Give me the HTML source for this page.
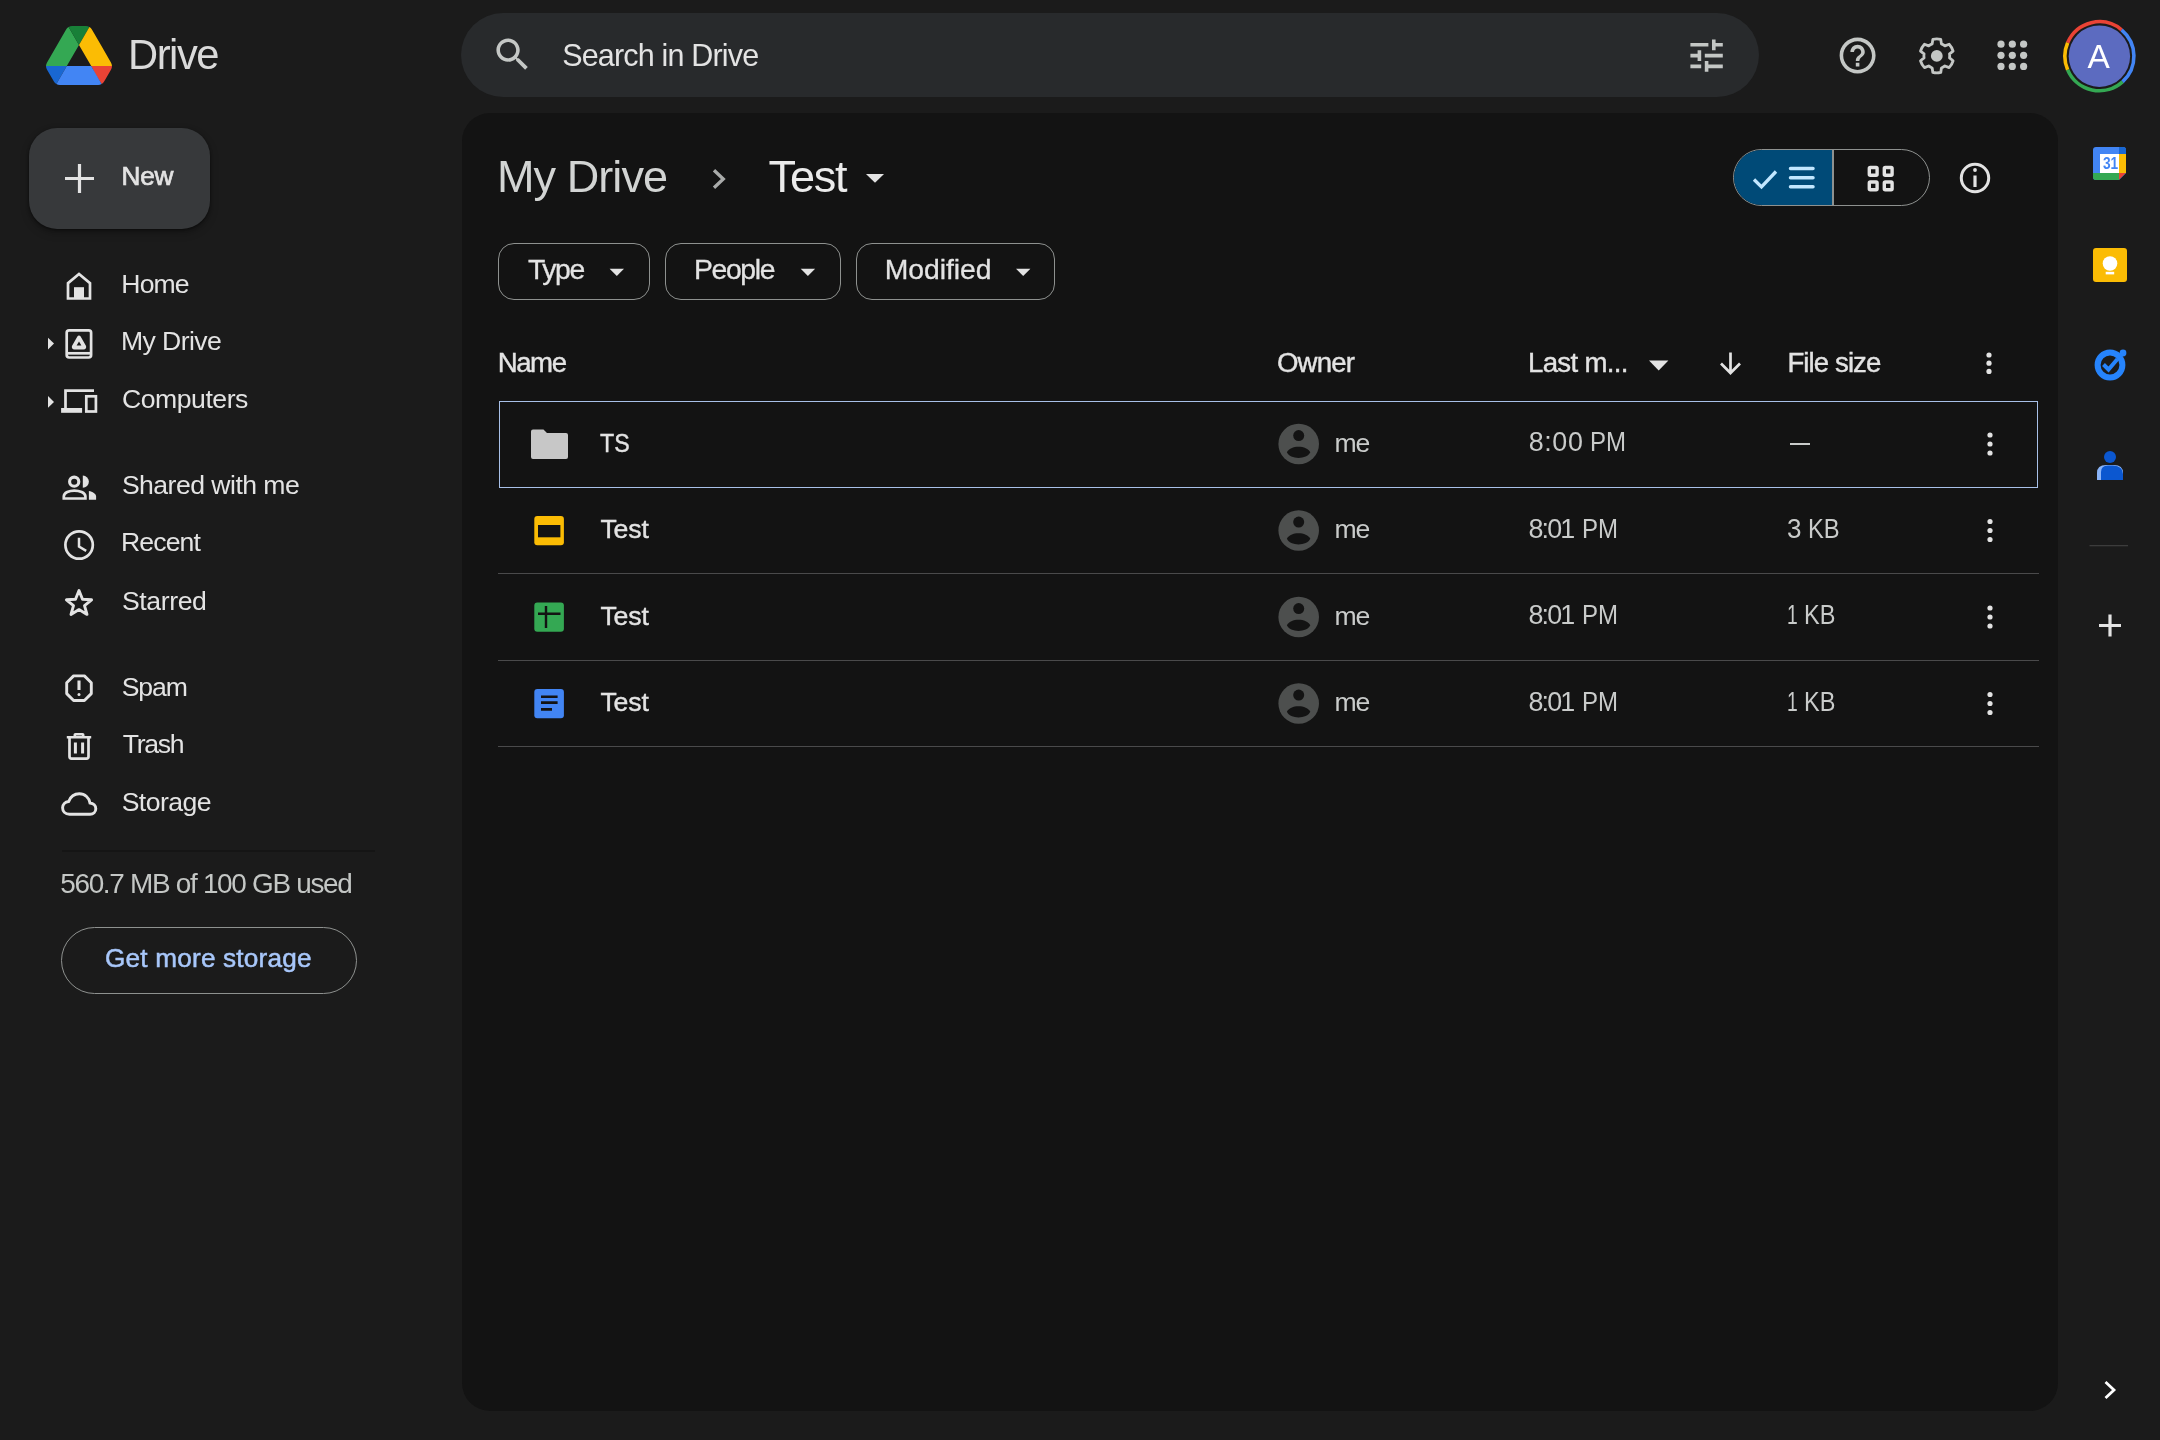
<!DOCTYPE html>
<html><head><meta charset="utf-8">
<style>
html,body{margin:0;padding:0;}
body{width:2160px;height:1440px;overflow:hidden;background:#1b1b1b;position:relative;font-family:"Liberation Sans",sans-serif;color:#e3e3e3;}
.a{position:absolute;box-sizing:content-box;}
.t{position:absolute;white-space:nowrap;line-height:1;}
#tx{position:absolute;left:0;top:0;width:2160px;height:1440px;will-change:transform;}
svg{position:absolute;overflow:visible;}
</style></head><body>
<svg style="left:45.8px;top:25.6px" width="66" height="59" viewBox="0 0 87.3 78">
<path d="m6.6 66.85 3.85 6.65c.8 1.4 1.95 2.5 3.3 3.3l13.75-23.8h-27.5c0 1.550.4 3.1 1.2 4.5z" fill="#1967d2"/>
<path d="m43.65 25-13.75-23.8c-1.35.8-2.5 1.9-3.3 3.3l-25.4 44a9.06 9.06 0 0 0 -1.2 4.5h27.5z" fill="#34a853"/>
<path d="m73.55 76.8c1.35-.8 2.5-1.9 3.3-3.3l1.6-2.75 7.65-13.25c.8-1.4 1.2-2.95 1.2-4.5h-27.502l5.852 11.5z" fill="#ea4335"/>
<path d="m43.65 25 13.75-23.8c-1.35-.8-2.9-1.2-4.5-1.2h-18.5c-1.6 0-3.15.45-4.5 1.2z" fill="#188038"/>
<path d="m59.8 53h-32.3l-13.750 23.8c1.35.8 2.9 1.2 4.5 1.2h50.8c1.6 0 3.15-.45 4.5-1.2z" fill="#4285f4"/>
<path d="m73.4 26.5-12.7-22c-.8-1.4-1.95-2.5-3.3-3.3l-13.75 23.8 16.15 28h27.45c0-1.55-.4-3.1-1.2-4.5z" fill="#fbbc04"/>
</svg>
<div class="a" style="left:29px;top:128px;width:181px;height:101px;border-radius:28px;background:#37393b;box-shadow:0 1px 3px rgba(0,0,0,.5),0 4px 8px rgba(0,0,0,.25)"></div>
<svg style="left:0;top:0" width="300" height="300"><path d="M79.5 164v29M65 178.5h29" stroke="#e3e3e3" stroke-width="3.2" fill="none"/></svg>

<svg style="left:0;top:0" width="400" height="900" fill="none" stroke="#e3e3e3" stroke-width="2.7">
 <!-- home -->
 <path d="M68 298.5V283.2L79 273.9L90 283.2V298.5Z" stroke-linejoin="miter"/>
 <rect x="74" y="287.2" width="10" height="11" fill="#e3e3e3" stroke="none"/>
 <!-- my drive -->
 <rect x="66.7" y="330.3" width="24.4" height="27.2" rx="2.4"/>
 <path d="M67 353.3H91"/>
 <path d="M79 337.2 L84.3 346.3 Q85 347.8 83.4 347.8 H74.6 Q73 347.8 73.7 346.3 Z" stroke-width="3.4" stroke-linejoin="round" fill="#e3e3e3"/>
 <path d="M79 341.6 L81.4 345.6 H76.6 Z" fill="#1b1b1b" stroke="none"/>
 <!-- computers -->
 <path d="M65.5 409V390.7H94" />
 <rect x="61.1" y="408" width="21" height="4.8" fill="#e3e3e3" stroke="none"/>
 <rect x="86.3" y="396.3" width="9.6" height="15.2"/>
 <!-- expand arrows -->
 <path d="M48 337.8L54 343.6L48 349.4Z" fill="#e3e3e3" stroke="none"/>
 <path d="M48 396L54 401.9L48 407.8Z" fill="#e3e3e3" stroke="none"/>
 <!-- shared -->
 <circle cx="74.2" cy="481.7" r="4.6" stroke-width="3.1"/>
 <path d="M82.8 475.6A6.1 6.1 0 0 1 82.8 487.8Z" fill="#e3e3e3" stroke="none"/>
 <path d="M63.8 498.5V496.5C63.8 492.5 69.5 490.6 74.3 490.6C79.1 490.6 85.4 492.5 85.4 496.5V498.5Z"/>
 <path d="M88.9 491C92.5 491.8 96.1 493.5 96.1 496.5V499.8H88.9Z" fill="#e3e3e3" stroke="none"/>
 <!-- recent -->
 <circle cx="79.1" cy="545" r="13.7"/>
 <path d="M79 537.8V546.6L86.2 550.8" stroke-width="2.5"/>
 <!-- star -->
 <path d="M79 590.5L82.5 599.2L91.6 599.8L84.5 605.6L87 614.4L79 609.6L71 614.4L73.5 605.6L66.4 599.8L75.5 599.2Z" stroke-width="2.9" stroke-linejoin="round"/>
 <!-- spam -->
 <path d="M73.6 675.9H84.4L91.3 682.8V693.6L84.4 700.5H73.6L66.7 693.6V682.8Z" stroke-width="2.9" stroke-linejoin="round"/>
 <path d="M79 680.5V690" stroke-width="3.1"/>
 <circle cx="79" cy="694.6" r="1.5" fill="#e3e3e3" stroke="none"/>
 <!-- trash -->
 <path d="M66.8 737.3H91.2M74.8 737V734.8Q74.8 734.2 75.4 734.2H82.6Q83.2 734.2 83.2 734.8V737" stroke-width="2.6"/>
 <path d="M69.5 737.5V756.6Q69.5 758.6 71.5 758.6H86.5Q88.5 758.6 88.5 756.6V737.5" stroke-width="2.7"/>
 <path d="M75.4 742.5V753.6M82.6 742.5V753.6" stroke-width="3"/>
 <!-- storage cloud -->
 <path d="M69.5 814.2C65 814.2 62.6 811.2 62.6 807.8C62.6 804.4 65.2 801.8 68.7 801.5C70.4 797 74.2 793.8 79.3 793.8C85.1 793.8 89.3 797.9 90 803C93.5 803.3 95.8 805.8 95.8 808.7C95.8 811.8 93.3 814.2 90.1 814.2Z" stroke-width="2.9"/>
</svg>
<div class="a" style="left:62px;top:850px;width:313px;height:2px;background:#151515"></div>
<div class="a" style="left:61px;top:927px;width:293.5px;height:65px;border-radius:34px;border:1.5px solid #8e918f"></div>
<div class="a" style="left:461px;top:13px;width:1298px;height:84px;border-radius:42px;background:#282a2c"></div>
<svg style="left:490.6px;top:33.3px" width="43.1" height="43.1" viewBox="0 0 24 24"><path fill="#c4c7c5" d="M15.5 14h-.79l-.28-.27C15.41 12.59 16 11.11 16 9.5 16 5.910 13.09 3 9.5 3S3 5.91 3 9.5 5.91 16 9.5 16c1.61 0 3.09-.59 4.23-1.57l.27.28v.79l5 4.99L20.49 19l-4.99-5zm-6 0C7.01 14 5 11.99 5 9.5S7.01 5 9.5 5 14 7.01 14 9.5 11.99 14 9.5 14z"/></svg>
<svg style="left:1685.4px;top:33.6px" width="43.2" height="43.2" viewBox="0 0 24 24"><path fill="#c4c7c5" d="M3 17v2h6v-2H3zM3 5v2h10V5H3zm10 16v-2h8v-2h-8v-2h-2v6h2zM7 9v2H3v2h4v2h2V9H7zm14 4v-2H11v2h10zm-6-4h2V7h4V5h-4V3h-2v6z"/></svg>
<svg style="left:1836px;top:34px" width="43.2" height="43.2" viewBox="0 0 24 24"><path fill="#c4c7c5" d="M11 18h2v-2h-2v2zm1-16C6.48 2 2 6.48 2 12s4.48 10 10 10 10-4.48 10-10S17.520 2 12 2zm0 18c-4.41 0-8-3.59-8-8s3.59-8 8-8 8 3.59 8 8-3.59 8-8 8zm0-14c-2.21 0-4 1.79-4 4h2c0-1.1.9-2 2-2s2 .9 2 2c0 2-3 1.75-3 5h2c0-2.25 3-2.5 3-5 0-2.21-1.79-4-4-4z"/></svg>
<svg style="left:0;top:0" width="2160" height="120"><path d="M1941.42 43.86L1940.77 39.37A17.0 17.0 0 0 0 1932.83 39.37L1932.18 43.86A12.9 12.9 0 0 0 1928.68 45.87L1924.47 44.20A17.0 17.0 0 0 0 1920.50 51.07L1924.06 53.88A12.9 12.9 0 0 0 1924.06 57.92L1920.50 60.73A17.0 17.0 0 0 0 1924.47 67.60L1928.68 65.93A12.9 12.9 0 0 0 1932.18 67.94L1932.83 72.43A17.0 17.0 0 0 0 1940.77 72.43L1941.42 67.94A12.9 12.9 0 0 0 1944.92 65.93L1949.13 67.60A17.0 17.0 0 0 0 1953.10 60.73L1949.54 57.92A12.9 12.9 0 0 0 1949.54 53.88L1953.10 51.07A17.0 17.0 0 0 0 1949.13 44.20L1944.92 45.87A12.9 12.9 0 0 0 1941.42 43.86Z" fill="none" stroke="#c4c7c5" stroke-width="2.8" stroke-linejoin="round"/><circle cx="1936.8" cy="55.9" r="5.9" fill="#c4c7c5"/></svg>
<svg style="left:0;top:0" width="2160" height="120" fill="#c4c7c5"><circle cx="2001.0" cy="44.2" r="3.6"/><circle cx="2001.0" cy="55.3" r="3.6"/><circle cx="2001.0" cy="66.4" r="3.6"/><circle cx="2012.3" cy="44.2" r="3.6"/><circle cx="2012.3" cy="55.3" r="3.6"/><circle cx="2012.3" cy="66.4" r="3.6"/><circle cx="2023.6" cy="44.2" r="3.6"/><circle cx="2023.6" cy="55.3" r="3.6"/><circle cx="2023.6" cy="66.4" r="3.6"/></svg>
<svg style="left:0;top:0" width="2160" height="200" fill="none" stroke-width="3.6"><path d="M2067.64 42.72A34.5 34.5 0 0 1 2121.58 29.77" stroke="#ea4335"/><path d="M2121.58 29.77A34.5 34.5 0 0 1 2122.49 81.84" stroke="#4285f4"/><path d="M2122.49 81.84A34.5 34.5 0 0 1 2067.64 69.68" stroke="#34a853"/><path d="M2067.64 69.68A34.5 34.5 0 0 1 2067.64 42.72" stroke="#fbbc04"/><circle cx="2099.4" cy="56.2" r="30.7" fill="#5c6bc0" stroke="none"/></svg>
<div class="a" style="left:462px;top:113px;width:1596px;height:1298px;border-radius:28px;background:#131313"></div>
<svg style="left:0;top:0" width="2160" height="400" fill="none"><path d="M714 170.2L723.3 179L714 187.8" stroke="#a9abaa" stroke-width="3.3"/><path d="M866 174L875 182.7L884 174Z" fill="#e3e3e3"/></svg>
<div class="a" style="left:1733px;top:149px;width:195px;height:55px;border-radius:29px;border:1.5px solid #8e918f;overflow:hidden"><div class="a" style="left:0;top:0;width:98px;height:100%;background:#004a77"></div><div class="a" style="left:98px;top:0;width:1.5px;height:100%;background:#8e918f"></div></div>
<svg style="left:0;top:0" width="2160" height="400" fill="none">
<path d="M1754 179.5L1761.5 187L1776 171.5" stroke="#c2e7ff" stroke-width="3.3"/>
<path d="M1790.5 168.6H1813M1790.5 177.7H1813M1790.5 186.7H1813" stroke="#c2e7ff" stroke-width="3.5" stroke-linecap="round"/>
<g stroke="#e3e3e3" stroke-width="3.4"><rect x="1869.3" y="167.5" width="7.8" height="7.8" rx="1"/><rect x="1884.3" y="167.5" width="7.8" height="7.8" rx="1"/><rect x="1869.3" y="182" width="7.8" height="7.8" rx="1"/><rect x="1884.3" y="182" width="7.8" height="7.8" rx="1"/></g>
<circle cx="1975" cy="178" r="13.7" stroke="#e3e3e3" stroke-width="3"/>
<path d="M1975 175.5V187" stroke="#e3e3e3" stroke-width="3.2"/><circle cx="1975" cy="170" r="1.9" fill="#e3e3e3"/>
</svg>
<div class="a" style="left:498px;top:243px;width:150.0px;height:55px;border-radius:16px;border:1.5px solid #8e918f"></div>
<svg style="left:0;top:0" width="2160" height="400"><path d="M609.6 268.8L616.8 276L624.0 268.8Z" fill="#e3e3e3"/></svg>
<div class="a" style="left:665px;top:243px;width:173.6px;height:55px;border-radius:16px;border:1.5px solid #8e918f"></div>
<svg style="left:0;top:0" width="2160" height="400"><path d="M800.7 268.8L807.9 276L815.1 268.8Z" fill="#e3e3e3"/></svg>
<div class="a" style="left:856px;top:243px;width:196.6px;height:55px;border-radius:16px;border:1.5px solid #8e918f"></div>
<svg style="left:0;top:0" width="2160" height="400"><path d="M1016 268.8L1023.2 276L1030.4 268.8Z" fill="#e3e3e3"/></svg>
<svg style="left:0;top:0" width="2160" height="400" fill="#e3e3e3">
<path d="M1649 360.5L1658.7 370.5L1668.4 360.5Z"/>
<path d="M1730.5 352.5V372.5M1721 363.5L1730.5 373L1740 363.5" stroke="#e3e3e3" stroke-width="2.7" fill="none"/>
<circle cx="1989" cy="355" r="2.6"/><circle cx="1989" cy="363.2" r="2.6"/><circle cx="1989" cy="371.4" r="2.6"/>
</svg>
<div class="a" style="left:499px;top:401px;width:1536.5px;height:84.5px;border:1.5px solid #a8c0e8"></div>
<div class="a" style="left:498px;top:573px;width:1541px;height:1.3px;background:#4a4a4b"></div>
<div class="a" style="left:498px;top:660px;width:1541px;height:1.3px;background:#4a4a4b"></div>
<div class="a" style="left:498px;top:746px;width:1541px;height:1.3px;background:#4a4a4b"></div>
<svg style="left:0;top:0" width="2160" height="800"><path d="M531 431.5Q531 429.5 533 429.5H543.5L547 433H566Q568 433 568 435V457Q568 459 566 459H533Q531 459 531 457Z" fill="#c7c7c7"/></svg>
<svg style="left:0;top:0" width="2160" height="800"><circle cx="1298.7" cy="444" r="20.3" fill="#4d4f4e"/><circle cx="1298.7" cy="435.6" r="5.5" fill="#131313"/><path d="M1286.9 452.3C1290 444.8 1307 444.8 1310.3 452.3C1307 459.8 1290 459.8 1286.9 452.3Z" fill="#131313"/></svg>
<div class="a" style="left:1789.5px;top:443px;width:20.5px;height:2px;background:#c9cbca"></div>
<svg style="left:0;top:0" width="2160" height="800" fill="#e3e3e3"><circle cx="1990" cy="435" r="2.6"/><circle cx="1990" cy="444" r="2.6"/><circle cx="1990" cy="453" r="2.6"/></svg>
<svg style="left:0;top:0" width="2160" height="800"><rect x="534.3" y="516.0" width="29.6" height="29.2" rx="3" fill="#fbbc04"/><rect x="538" y="525.0" width="22.4" height="12.3" fill="#131313"/></svg>
<svg style="left:0;top:0" width="2160" height="800"><circle cx="1298.7" cy="530.5" r="20.3" fill="#4d4f4e"/><circle cx="1298.7" cy="522.1" r="5.5" fill="#131313"/><path d="M1286.9 538.8C1290 531.3 1307 531.3 1310.3 538.8C1307 546.3 1290 546.3 1286.9 538.8Z" fill="#131313"/></svg>
<svg style="left:0;top:0" width="2160" height="800" fill="#e3e3e3"><circle cx="1990" cy="521.5" r="2.6"/><circle cx="1990" cy="530.5" r="2.6"/><circle cx="1990" cy="539.5" r="2.6"/></svg>
<svg style="left:0;top:0" width="2160" height="800"><rect x="534.3" y="602.5" width="29.6" height="29.2" rx="3" fill="#34a853"/><path d="M538 613.7H560.5M546 606V628" stroke="#131313" stroke-width="2.4"/></svg>
<svg style="left:0;top:0" width="2160" height="800"><circle cx="1298.7" cy="617" r="20.3" fill="#4d4f4e"/><circle cx="1298.7" cy="608.6" r="5.5" fill="#131313"/><path d="M1286.9 625.3C1290 617.8 1307 617.8 1310.3 625.3C1307 632.8 1290 632.8 1286.9 625.3Z" fill="#131313"/></svg>
<svg style="left:0;top:0" width="2160" height="800" fill="#e3e3e3"><circle cx="1990" cy="608" r="2.6"/><circle cx="1990" cy="617" r="2.6"/><circle cx="1990" cy="626" r="2.6"/></svg>
<svg style="left:0;top:0" width="2160" height="800"><rect x="534.3" y="689.0" width="29.6" height="29.2" rx="3" fill="#4285f4"/><path d="M541 696.8H557.6M541 702.6H557.6M541 709.4H552" stroke="#131313" stroke-width="2.6"/></svg>
<svg style="left:0;top:0" width="2160" height="800"><circle cx="1298.7" cy="703.5" r="20.3" fill="#4d4f4e"/><circle cx="1298.7" cy="695.1" r="5.5" fill="#131313"/><path d="M1286.9 711.8C1290 704.3 1307 704.3 1310.3 711.8C1307 719.3 1290 719.3 1286.9 711.8Z" fill="#131313"/></svg>
<svg style="left:0;top:0" width="2160" height="800" fill="#e3e3e3"><circle cx="1990" cy="694.5" r="2.6"/><circle cx="1990" cy="703.5" r="2.6"/><circle cx="1990" cy="712.5" r="2.6"/></svg>
<svg style="left:0;top:0" width="2160" height="1440">
<!-- calendar -->
<defs><clipPath id="calclip"><path d="M2096 147H2123Q2126 147 2126 150V173L2119 180H2096Q2093 180 2093 177V150Q2093 147 2096 147Z"/></clipPath></defs>
<g clip-path="url(#calclip)">
<rect x="2093" y="147" width="33" height="33" fill="#4285f4"/>
<rect x="2119" y="147" width="7" height="7" fill="#1967d2"/>
<rect x="2119" y="154" width="7" height="19" fill="#fbbc04"/>
<rect x="2093" y="173" width="26" height="7" fill="#34a853"/>
<path d="M2119 173H2126L2119 180Z" fill="#ea4335"/>
<rect x="2100" y="154" width="19" height="19" fill="#ffffff"/>
</g>
<!-- keep -->
<rect x="2093" y="248" width="34" height="34" rx="3" fill="#fbbc04"/>
<circle cx="2110" cy="263.5" r="7.3" fill="#ffffff"/>
<rect x="2105.7" y="271.8" width="8.5" height="2.6" fill="#ffffff"/>
<!-- tasks -->
<circle cx="2110" cy="365" r="12.4" stroke="#2684fc" stroke-width="6" fill="none"/>
<path d="M2103.5 364.5L2108.5 369.5L2117.5 359" stroke="#2684fc" stroke-width="4" fill="none"/>
<circle cx="2123" cy="353" r="3.4" fill="#2684fc"/>
<!-- contacts -->
<circle cx="2110" cy="457" r="6" fill="#0b57d0"/>
<path d="M2097 480V473Q2097 465 2106 465H2114Q2123 465 2123 473V480Z" fill="#8ab4f8"/>
<path d="M2101 480V472Q2101 465.5 2108 465.5H2113Q2123 466 2123 474V480Z" fill="#0b57d0"/>
<!-- divider -->
<rect x="2089.5" y="545" width="38.5" height="1.3" fill="#3c3c3c"/>
<!-- plus -->
<path d="M2110 614.5V636.5M2099 625.5H2121" stroke="#e3e3e3" stroke-width="3.2"/>
<!-- bottom chevron -->
<path d="M2105.5 1382L2114 1390L2105.5 1398" stroke="#ffffff" stroke-width="2.8" fill="none"/>
</svg>
<div id="tx">
<div class="t" style="left:128.00px;top:33.89px;font-size:41.72px;letter-spacing:-1.455px;color:#dadada;">Drive</div>
<div class="t" style="left:121.50px;top:163.15px;font-size:26.16px;letter-spacing:-0.168px;color:#e3e3e3;-webkit-text-stroke:0.7px #e3e3e3;">New</div>
<div class="t" style="left:121.30px;top:270.78px;font-size:26.60px;letter-spacing:-0.872px;color:#e3e3e3;">Home</div>
<div class="t" style="left:121.00px;top:327.78px;font-size:26.60px;letter-spacing:-0.579px;color:#e3e3e3;">My Drive</div>
<div class="t" style="left:122.00px;top:385.78px;font-size:26.60px;letter-spacing:-0.462px;color:#e3e3e3;">Computers</div>
<div class="t" style="left:121.90px;top:471.68px;font-size:26.60px;letter-spacing:-0.529px;color:#e3e3e3;">Shared with me</div>
<div class="t" style="left:121.00px;top:529.48px;font-size:26.60px;letter-spacing:-0.885px;color:#e3e3e3;">Recent</div>
<div class="t" style="left:122.00px;top:587.88px;font-size:26.60px;letter-spacing:-0.396px;color:#e3e3e3;">Starred</div>
<div class="t" style="left:121.70px;top:673.68px;font-size:26.60px;letter-spacing:-1.097px;color:#e3e3e3;">Spam</div>
<div class="t" style="left:122.70px;top:731.48px;font-size:26.60px;letter-spacing:-1.292px;color:#e3e3e3;">Trash</div>
<div class="t" style="left:121.70px;top:788.98px;font-size:26.60px;letter-spacing:-0.551px;color:#e3e3e3;">Storage</div>
<div class="t" style="left:60.20px;top:870.38px;font-size:27.91px;letter-spacing:-1.293px;color:#c4c7c5;">560.7 MB of 100 GB used</div>
<div class="t" style="left:105.00px;top:945.05px;font-size:26.16px;letter-spacing:0.201px;color:#a8c7fa;-webkit-text-stroke:0.5px #a8c7fa;">Get more storage</div>
<div class="t" style="left:562.20px;top:40.36px;font-size:30.52px;letter-spacing:-0.831px;color:#e3e3e3;">Search in Drive</div>
<div class="t" style="left:2087.50px;top:40.20px;font-size:33.43px;letter-spacing:0.000px;color:#ffffff;">A</div>
<div class="t" style="left:497.00px;top:153.86px;font-size:45.06px;letter-spacing:-0.947px;color:#d2d4d3;">My Drive</div>
<div class="t" style="left:768.60px;top:153.86px;font-size:45.06px;letter-spacing:-1.233px;color:#ebebeb;">Test</div>
<div class="t" style="left:528.00px;top:255.01px;font-size:28.34px;letter-spacing:-1.420px;color:#e3e3e3;-webkit-text-stroke:0.3px #e3e3e3;">Type</div>
<div class="t" style="left:694.00px;top:255.01px;font-size:28.34px;letter-spacing:-1.351px;color:#e3e3e3;-webkit-text-stroke:0.3px #e3e3e3;">People</div>
<div class="t" style="left:884.70px;top:255.01px;font-size:28.34px;letter-spacing:-0.046px;color:#e3e3e3;-webkit-text-stroke:0.3px #e3e3e3;">Modified</div>
<div class="t" style="left:497.70px;top:349.42px;font-size:27.62px;letter-spacing:-1.431px;color:#e3e3e3;-webkit-text-stroke:0.4px #e3e3e3;">Name</div>
<div class="t" style="left:1277.00px;top:349.42px;font-size:27.62px;letter-spacing:-0.856px;color:#e3e3e3;-webkit-text-stroke:0.4px #e3e3e3;">Owner</div>
<div class="t" style="left:1528.00px;top:349.42px;font-size:27.62px;letter-spacing:-0.687px;color:#e3e3e3;-webkit-text-stroke:0.4px #e3e3e3;">Last m...</div>
<div class="t" style="left:1787.40px;top:349.42px;font-size:27.62px;letter-spacing:-0.913px;color:#e3e3e3;-webkit-text-stroke:0.4px #e3e3e3;">File size</div>
<div class="t" style="left:600.40px;top:429.68px;font-size:26.60px;transform:scaleX(0.8726);transform-origin:0 0;color:#e3e3e3;-webkit-text-stroke:0.4px #e3e3e3;">TS</div>
<div class="t" style="left:1334.40px;top:429.68px;font-size:26.60px;letter-spacing:-1.153px;color:#c9cbca;">me</div>
<div class="t" style="left:1528.70px;top:429.44px;font-size:26.89px;letter-spacing:0.613px;color:#c9cbca;">8:00</div>
<div class="t" style="left:1589.51px;top:429.44px;font-size:26.89px;transform:scaleX(0.8937);transform-origin:0 0;color:#c9cbca;">PM</div>
<div class="t" style="left:600.40px;top:516.18px;font-size:26.60px;letter-spacing:-0.119px;color:#e3e3e3;-webkit-text-stroke:0.4px #e3e3e3;">Test</div>
<div class="t" style="left:1334.40px;top:516.18px;font-size:26.60px;letter-spacing:-1.153px;color:#c9cbca;">me</div>
<div class="t" style="left:1528.40px;top:515.94px;font-size:26.89px;letter-spacing:-1.820px;color:#c9cbca;">8:01</div>
<div class="t" style="left:1581.51px;top:515.94px;font-size:26.89px;transform:scaleX(0.8937);transform-origin:0 0;color:#c9cbca;">PM</div>
<div class="t" style="left:1787.43px;top:515.94px;font-size:26.89px;transform:scaleX(0.9692);transform-origin:0 0;color:#c9cbca;">3</div>
<div class="t" style="left:1807.83px;top:515.94px;font-size:26.89px;transform:scaleX(0.8838);transform-origin:0 0;color:#c9cbca;">KB</div>
<div class="t" style="left:600.40px;top:602.68px;font-size:26.60px;letter-spacing:-0.119px;color:#e3e3e3;-webkit-text-stroke:0.4px #e3e3e3;">Test</div>
<div class="t" style="left:1334.40px;top:602.68px;font-size:26.60px;letter-spacing:-1.153px;color:#c9cbca;">me</div>
<div class="t" style="left:1528.40px;top:602.44px;font-size:26.89px;letter-spacing:-1.820px;color:#c9cbca;">8:01</div>
<div class="t" style="left:1581.51px;top:602.44px;font-size:26.89px;transform:scaleX(0.8937);transform-origin:0 0;color:#c9cbca;">PM</div>
<div class="t" style="left:1786.97px;top:602.44px;font-size:26.89px;transform:scaleX(0.7167);transform-origin:0 0;color:#c9cbca;">1</div>
<div class="t" style="left:1803.95px;top:602.44px;font-size:26.89px;transform:scaleX(0.8747);transform-origin:0 0;color:#c9cbca;">KB</div>
<div class="t" style="left:600.40px;top:689.18px;font-size:26.60px;letter-spacing:-0.119px;color:#e3e3e3;-webkit-text-stroke:0.4px #e3e3e3;">Test</div>
<div class="t" style="left:1334.40px;top:689.18px;font-size:26.60px;letter-spacing:-1.153px;color:#c9cbca;">me</div>
<div class="t" style="left:1528.40px;top:688.94px;font-size:26.89px;letter-spacing:-1.820px;color:#c9cbca;">8:01</div>
<div class="t" style="left:1581.51px;top:688.94px;font-size:26.89px;transform:scaleX(0.8937);transform-origin:0 0;color:#c9cbca;">PM</div>
<div class="t" style="left:1786.97px;top:688.94px;font-size:26.89px;transform:scaleX(0.7167);transform-origin:0 0;color:#c9cbca;">1</div>
<div class="t" style="left:1803.95px;top:688.94px;font-size:26.89px;transform:scaleX(0.8747);transform-origin:0 0;color:#c9cbca;">KB</div>
<div class="t" style="left:2102.50px;top:155.85px;font-size:16.72px;transform:scaleX(0.8201);transform-origin:0 0;color:#4285f4;font-weight:bold;">31</div>
</div>
</body></html>
